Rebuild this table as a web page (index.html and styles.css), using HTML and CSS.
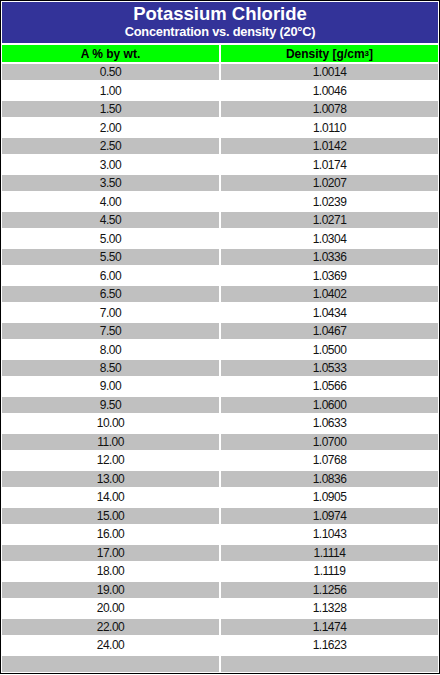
FILE: index.html
```html
<!DOCTYPE html>
<html>
<head>
<meta charset="utf-8">
<title>Potassium Chloride</title>
<link rel="stylesheet" href="styles.css">
</head>
<body>
<div class="frame">
  <div class="sheet">
    <div class="title">
      <div class="main">Potassium Chloride</div>
      <div class="sub">Concentration vs. density (20°C)</div>
    </div>
    <div class="head">A % by wt.</div>
    <div class="head">Density [g/cm<sup>3</sup>]</div>
    <div class="c g">0.50</div><div class="c g">1.0014</div>
    <div class="c">1.00</div><div class="c">1.0046</div>
    <div class="c g">1.50</div><div class="c g">1.0078</div>
    <div class="c">2.00</div><div class="c">1.0110</div>
    <div class="c g">2.50</div><div class="c g">1.0142</div>
    <div class="c">3.00</div><div class="c">1.0174</div>
    <div class="c g">3.50</div><div class="c g">1.0207</div>
    <div class="c">4.00</div><div class="c">1.0239</div>
    <div class="c g">4.50</div><div class="c g">1.0271</div>
    <div class="c">5.00</div><div class="c">1.0304</div>
    <div class="c g">5.50</div><div class="c g">1.0336</div>
    <div class="c">6.00</div><div class="c">1.0369</div>
    <div class="c g">6.50</div><div class="c g">1.0402</div>
    <div class="c">7.00</div><div class="c">1.0434</div>
    <div class="c g">7.50</div><div class="c g">1.0467</div>
    <div class="c">8.00</div><div class="c">1.0500</div>
    <div class="c g">8.50</div><div class="c g">1.0533</div>
    <div class="c">9.00</div><div class="c">1.0566</div>
    <div class="c g">9.50</div><div class="c g">1.0600</div>
    <div class="c">10.00</div><div class="c">1.0633</div>
    <div class="c g">11.00</div><div class="c g">1.0700</div>
    <div class="c">12.00</div><div class="c">1.0768</div>
    <div class="c g">13.00</div><div class="c g">1.0836</div>
    <div class="c">14.00</div><div class="c">1.0905</div>
    <div class="c g">15.00</div><div class="c g">1.0974</div>
    <div class="c">16.00</div><div class="c">1.1043</div>
    <div class="c g">17.00</div><div class="c g">1.1114</div>
    <div class="c">18.00</div><div class="c">1.1119</div>
    <div class="c g">19.00</div><div class="c g">1.1256</div>
    <div class="c">20.00</div><div class="c">1.1328</div>
    <div class="c g">22.00</div><div class="c g">1.1474</div>
    <div class="c">24.00</div><div class="c">1.1623</div>
    <div class="c g"></div><div class="c g"></div>
  </div>
</div>
</body>
</html>
```
FILE: styles.css
```css
html, body {
  margin: 0;
  padding: 0;
  background: #ffffff;
}
.frame {
  box-sizing: border-box;
  width: 440px;
  height: 674px;
  border: 1px solid #000000;
  padding: 1px;
  background: #ffffff;
}
.sheet {
  height: 100%;
  display: grid;
  grid-template-columns: 217px 217px;
  grid-template-rows: 41px 17px;
  grid-auto-rows: 1fr;
  gap: 2px;
  font-family: "Liberation Sans", Arial, sans-serif;
  color: #000000;
}
.title {
  grid-column: 1 / -1;
  background: #333399;
  color: #ffffff;
  display: flex;
  flex-direction: column;
  align-items: center;
  padding-top: 2px;
  font-weight: bold;
}
.main {
  font-size: 18.5px;
  line-height: 20px;
}
.sub {
  font-size: 12.8px;
  line-height: 15px;
  letter-spacing: -0.2px;
}
.head {
  background: #00ff00;
  font-weight: bold;
  font-size: 12px;
  display: flex;
  align-items: center;
  justify-content: center;
  line-height: 14px;
}
.head sup {
  font-size: 8px;
  line-height: 0;
  vertical-align: 6px;
}
.c {
  display: flex;
  align-items: center;
  justify-content: center;
  font-size: 12px;
  letter-spacing: -0.5px;
  line-height: 14px;
  color: #111111;
}
.g {
  background: #c0c0c0;
}
```
